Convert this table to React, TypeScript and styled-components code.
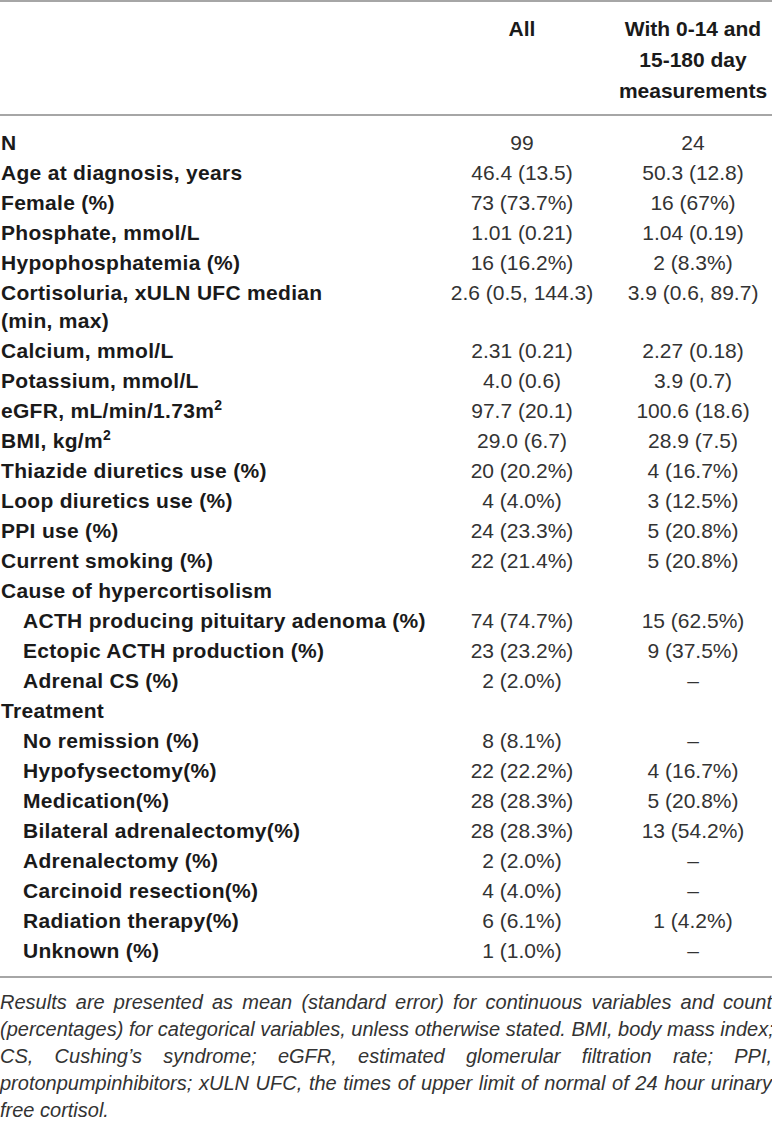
import React from "react";
import styled, { createGlobalStyle } from "styled-components";

const COLUMNS = "1fr 184px 158px";

const GlobalStyle = createGlobalStyle`
  body {
    margin: 0;
    background: #ffffff;
    font-family: "Liberation Sans", Arial, sans-serif;
  }
`;

const S = {
  Page: styled.div`
    width: 772px;
    color: #1a1a1a;
  `,
  Head: styled.div`
    display: grid;
    grid-template-columns: ${COLUMNS};
    border-top: 2px solid #a6a6a6;
    border-bottom: 2px solid #a6a6a6;
    padding: 11px 0 8px 0;
  `,
  HeadCell: styled.div`
    font-size: 21px;
    font-weight: bold;
    line-height: 31px;
    text-align: center;
    color: #1a1a1a;
  `,
  Body: styled.div`
    padding: 12px 0 10px 0;
    border-bottom: 2px solid #a6a6a6;
  `,
  Row: styled.div`
    display: grid;
    grid-template-columns: ${COLUMNS};
    padding: 1px 0;
    font-size: 21px;
    line-height: 28px;
  `,
  Label: styled.div<{ $indent?: boolean }>`
    font-weight: bold;
    white-space: nowrap;
    letter-spacing: 0.3px;
    padding-left: ${(p) => (p.$indent ? 23 : 1)}px;
    color: #1a1a1a;

    sup {
      font-size: 14px;
      line-height: 0;
      vertical-align: 8px;
    }
  `,
  Value: styled.div`
    text-align: center;
    color: #333333;
  `,
  Note: styled.div`
    padding: 11px 0 0 0;
    font-size: 20px;
    font-style: italic;
    line-height: 27px;
    color: #333333;
  `,
  NoteLine: styled.div<{ $last?: boolean }>`
    text-align: ${(p) => (p.$last ? "left" : "justify")};
    text-align-last: ${(p) => (p.$last ? "left" : "justify")};
    white-space: nowrap;
  `,
};

interface RowData {
  label: React.ReactNode;
  all?: string;
  sub?: string;
  indent?: boolean;
}

const rows: RowData[] = [
  { label: "N", all: "99", sub: "24" },
  { label: "Age at diagnosis, years", all: "46.4 (13.5)", sub: "50.3 (12.8)" },
  { label: "Female (%)", all: "73 (73.7%)", sub: "16 (67%)" },
  { label: "Phosphate, mmol/L", all: "1.01 (0.21)", sub: "1.04 (0.19)" },
  { label: "Hypophosphatemia (%)", all: "16 (16.2%)", sub: "2 (8.3%)" },
  {
    label: (
      <>
        Cortisoluria, xULN UFC median
        <br />
        (min, max)
      </>
    ),
    all: "2.6 (0.5, 144.3)",
    sub: "3.9 (0.6, 89.7)",
  },
  { label: "Calcium, mmol/L", all: "2.31 (0.21)", sub: "2.27 (0.18)" },
  { label: "Potassium, mmol/L", all: "4.0 (0.6)", sub: "3.9 (0.7)" },
  {
    label: (
      <>
        eGFR, mL/min/1.73m<sup>2</sup>
      </>
    ),
    all: "97.7 (20.1)",
    sub: "100.6 (18.6)",
  },
  {
    label: (
      <>
        BMI, kg/m<sup>2</sup>
      </>
    ),
    all: "29.0 (6.7)",
    sub: "28.9 (7.5)",
  },
  { label: "Thiazide diuretics use (%)", all: "20 (20.2%)", sub: "4 (16.7%)" },
  { label: "Loop diuretics use (%)", all: "4 (4.0%)", sub: "3 (12.5%)" },
  { label: "PPI use (%)", all: "24 (23.3%)", sub: "5 (20.8%)" },
  { label: "Current smoking (%)", all: "22 (21.4%)", sub: "5 (20.8%)" },
  { label: "Cause of hypercortisolism" },
  { label: "ACTH producing pituitary adenoma (%)", all: "74 (74.7%)", sub: "15 (62.5%)", indent: true },
  { label: "Ectopic ACTH production (%)", all: "23 (23.2%)", sub: "9 (37.5%)", indent: true },
  { label: "Adrenal CS (%)", all: "2 (2.0%)", sub: "–", indent: true },
  { label: "Treatment" },
  { label: "No remission (%)", all: "8 (8.1%)", sub: "–", indent: true },
  { label: "Hypofysectomy(%)", all: "22 (22.2%)", sub: "4 (16.7%)", indent: true },
  { label: "Medication(%)", all: "28 (28.3%)", sub: "5 (20.8%)", indent: true },
  { label: "Bilateral adrenalectomy(%)", all: "28 (28.3%)", sub: "13 (54.2%)", indent: true },
  { label: "Adrenalectomy (%)", all: "2 (2.0%)", sub: "–", indent: true },
  { label: "Carcinoid resection(%)", all: "4 (4.0%)", sub: "–", indent: true },
  { label: "Radiation therapy(%)", all: "6 (6.1%)", sub: "1 (4.2%)", indent: true },
  { label: "Unknown (%)", all: "1 (1.0%)", sub: "–", indent: true },
];

const noteLines = [
  "Results are presented as mean (standard error) for continuous variables and count",
  "(percentages) for categorical variables, unless otherwise stated. BMI, body mass index;",
  "CS, Cushing’s syndrome; eGFR, estimated glomerular filtration rate; PPI,",
  "protonpumpinhibitors; xULN UFC, the times of upper limit of normal of 24 hour urinary",
  "free cortisol.",
];

const App = () => (
  <S.Page>
    <GlobalStyle />
    <S.Head>
      <S.HeadCell />
      <S.HeadCell>All</S.HeadCell>
      <S.HeadCell>
        With 0-14 and
        <br />
        15-180 day
        <br />
        measurements
      </S.HeadCell>
    </S.Head>
    <S.Body>
      {rows.map((r, i) => (
        <S.Row key={i}>
          <S.Label $indent={r.indent}>{r.label}</S.Label>
          <S.Value>{r.all}</S.Value>
          <S.Value>{r.sub}</S.Value>
        </S.Row>
      ))}
    </S.Body>
    <S.Note>
      {noteLines.map((line, i) => (
        <S.NoteLine key={i} $last={i === noteLines.length - 1}>
          {line}
        </S.NoteLine>
      ))}
    </S.Note>
  </S.Page>
);

export default App;
